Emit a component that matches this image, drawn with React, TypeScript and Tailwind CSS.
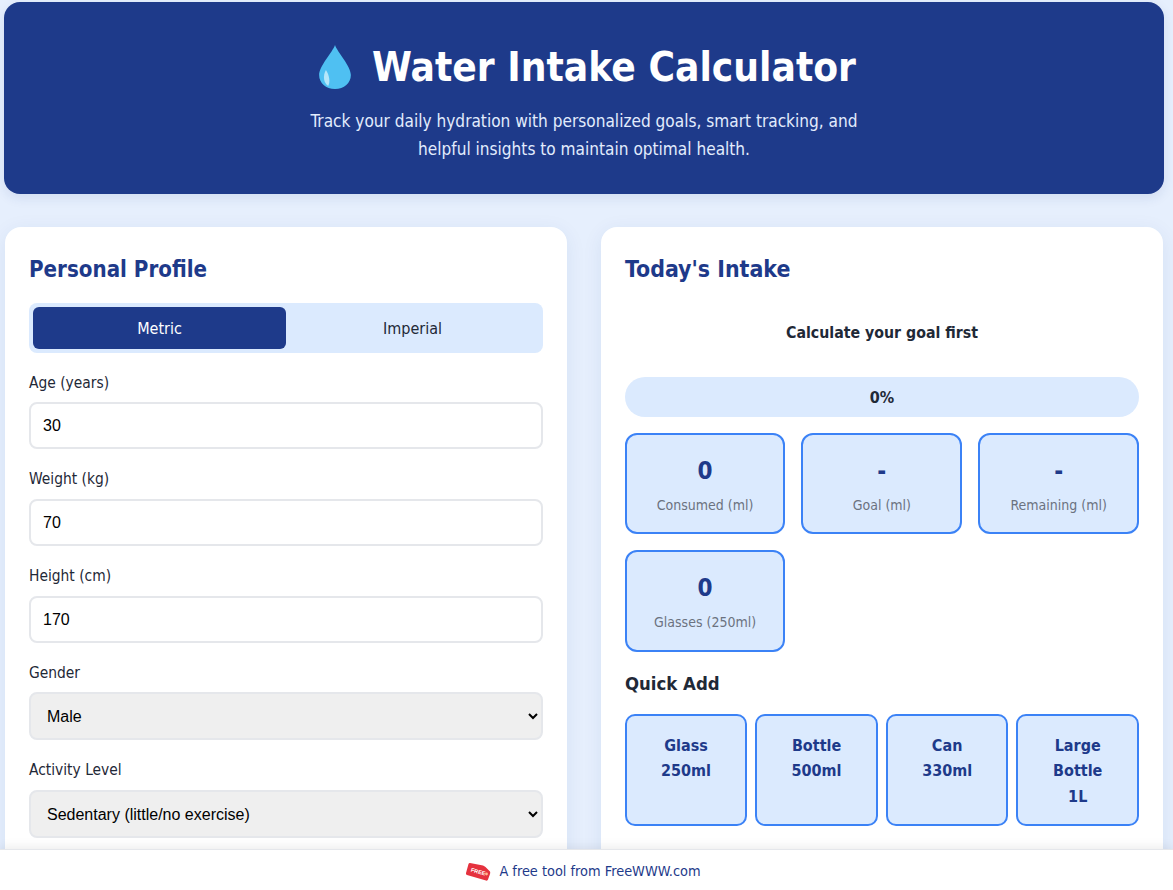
const font = { fontFamily: '"DejaVu Sans Condensed", "DejaVu Sans", sans-serif' };

function Drop() {
  return (
    <svg width="34" height="46" viewBox="0 0 30 46" preserveAspectRatio="none" className="shrink-0">
      <path d="M15 1 C17 8 29 22 29 31 C29 39 23 45 15 45 C7 45 1 39 1 31 C1 22 13 8 15 1 Z" fill="#4fc0f2" />
      <path d="M7 26 C4 32 5 39 9 42 C11 38 10 31 7 26 Z" fill="#b5e6fa" />
    </svg>
  );
}

function Tag() {
  return (
    <svg width="26" height="20" viewBox="0 0 26 20" className="shrink-0">
      <path d="M5 1 L18 3.5 Q19.5 4 20.5 5 L25 9.5 Q25.5 10.5 25 12 L23 17.5 Q22.5 19 21 18.5 L2 13 Q0.5 12.5 1 11 L3.5 2 Q4 0.8 5 1 Z" fill="#e5323e" />
      <circle cx="21.5" cy="12" r="1.4" fill="#ffb98f" />
      <text x="5.5" y="9.5" fontSize="5.6" fontWeight="700" fill="#fff" transform="rotate(15 5.5 9.5)" fontFamily="Liberation Sans, sans-serif">FREE</text>
    </svg>
  );
}

function Label({ children }: { children: string }) {
  return <div className="text-[15.4px] leading-[20px] text-[#1f2937] mb-[9.4px]">{children}</div>;
}

function NumField({ label, value }: { label: string; value: string }) {
  return (
    <div className="mb-[20.4px]">
      <Label>{label}</Label>
      <input
        readOnly
        value={value}
        className="block w-full h-[47px] px-[12px] pt-[2px] bg-white border-2 border-[#e5e7eb] rounded-[8px] text-[16px] text-black outline-none"
        style={{ fontFamily: '"Liberation Sans", sans-serif' }}
      />
    </div>
  );
}

function SelectField({ label, options }: { label: string; options: string }) {
  return (
    <div className="mb-[20px]">
      <Label>{label}</Label>
      <select
        className="block w-full h-[48px] px-[12px] pt-[1px] bg-[#efefef] border-2 border-[#e5e7eb] rounded-[8px] text-[16px] text-black outline-none"
        style={{ fontFamily: '"Liberation Sans", sans-serif' }}
      >
        <option>{options}</option>
      </select>
    </div>
  );
}

function Stat({ value, label }: { value: string; label: string }) {
  return (
    <div className="h-[101.4px] flex flex-col items-center bg-[#dbeafe] border-2 border-[#3b82f6] rounded-[12px] pt-[20px]">
      <div className="text-[24px] leading-[32px] font-bold text-[#1e3a8a]">{value}</div>
      <div className="text-[14px] leading-[18px] mt-[9px] text-[#6b7280]">{label}</div>
    </div>
  );
}

function Quick({ lines }: { lines: string[] }) {
  return (
    <button className="h-[112px] flex flex-col justify-start items-center pt-[16.7px] bg-[#dbeafe] border-2 border-[#3b82f6] rounded-[10px] text-[16px] leading-[25.6px] font-bold text-[#1e3a8a]">
      {lines.map((l) => (
        <span key={l}>{l}</span>
      ))}
    </button>
  );
}

export default function App() {
  return (
    <div className="relative h-screen overflow-hidden bg-[#e6effd]" style={font}>
      <div className="w-[1160px] ml-[4px] pt-[2px]">
        <header className="h-[192px] bg-[#1e3a8a] rounded-[16px] flex flex-col items-center pt-[37px] shadow-[0_4px_12px_rgba(30,58,138,0.1)]">
          <h1 className="flex items-center ml-[6px] text-[40.25px] leading-[56px] font-bold text-white">
            <Drop />
            <span className="ml-[20px]">Water Intake Calculator</span>
          </h1>
          <p className="w-[600px] mt-[12px] text-center text-[17.1px] leading-[28px] text-[#e2ecfd]">
            Track your daily hydration with personalized goals, smart tracking, and helpful insights to maintain optimal health.
          </p>
        </header>

        <div className="grid grid-cols-2 gap-[34px] mt-[33px] px-[1px]">
          <section className="h-[700px] bg-white rounded-[16px] px-[24px] pt-[24px] shadow-[0_4px_20px_rgba(30,58,138,0.08)]">
            <h2 className="text-[22.15px] leading-[36px] font-bold text-[#1e3a8a] mb-[16px]">Personal Profile</h2>
            <div className="h-[50px] p-[4px] grid grid-cols-2 bg-[#dbeafe] rounded-[8px] mb-[19.6px]">
              <div className="flex items-center justify-center pt-[2px] rounded-[6px] bg-[#1e3a8a] text-white text-[16px]">Metric</div>
              <div className="flex items-center justify-center pt-[2px] text-[#1f2937] text-[16px]">Imperial</div>
            </div>
            <NumField label="Age (years)" value="30" />
            <NumField label="Weight (kg)" value="70" />
            <NumField label="Height (cm)" value="170" />
            <SelectField label="Gender" options="Male" />
            <SelectField label="Activity Level" options="Sedentary (little/no exercise)" />
          </section>

          <section className="h-[700px] bg-white rounded-[16px] px-[24px] pt-[24px] shadow-[0_4px_20px_rgba(30,58,138,0.08)]">
            <h2 className="text-[22.9px] leading-[36px] font-bold text-[#1e3a8a]">Today's Intake</h2>
            <div className="mt-[36px] text-center text-[15.75px] leading-[20px] font-bold text-[#1f2937]">Calculate your goal first</div>
            <div className="mt-[34px] h-[40px] flex items-center justify-center pt-[1px] rounded-[20px] bg-[#dbeafe] text-[16px] font-bold text-[#1f2937]">0%</div>
            <div className="grid grid-cols-3 gap-[16px] mt-[16px] -ml-[0.3px]">
              <Stat value="0" label="Consumed (ml)" />
              <Stat value="-" label="Goal (ml)" />
              <Stat value="-" label="Remaining (ml)" />
              <Stat value="0" label="Glasses (250ml)" />
            </div>
            <h3 className="mt-[19.2px] text-[18.4px] leading-[26px] font-bold text-[#1f2937]">Quick Add</h3>
            <div className="grid grid-cols-4 gap-[8px] mt-[17px] -ml-[0.3px]">
              <Quick lines={["Glass", "250ml"]} />
              <Quick lines={["Bottle", "500ml"]} />
              <Quick lines={["Can", "330ml"]} />
              <Quick lines={["Large", "Bottle", "1L"]} />
            </div>
          </section>
        </div>
      </div>

      <footer className="absolute left-0 right-0 bottom-0 h-[41px] flex items-center justify-center gap-[8px] pt-[3px] pr-[7px] bg-white border-t border-[#e5e7eb] shadow-[0_-2px_10px_rgba(0,0,0,0.08)] text-[14.4px] text-[#1e3a8a]">
        <Tag />
        <span>A free tool from FreeWWW.com</span>
      </footer>
    </div>
  );
}
